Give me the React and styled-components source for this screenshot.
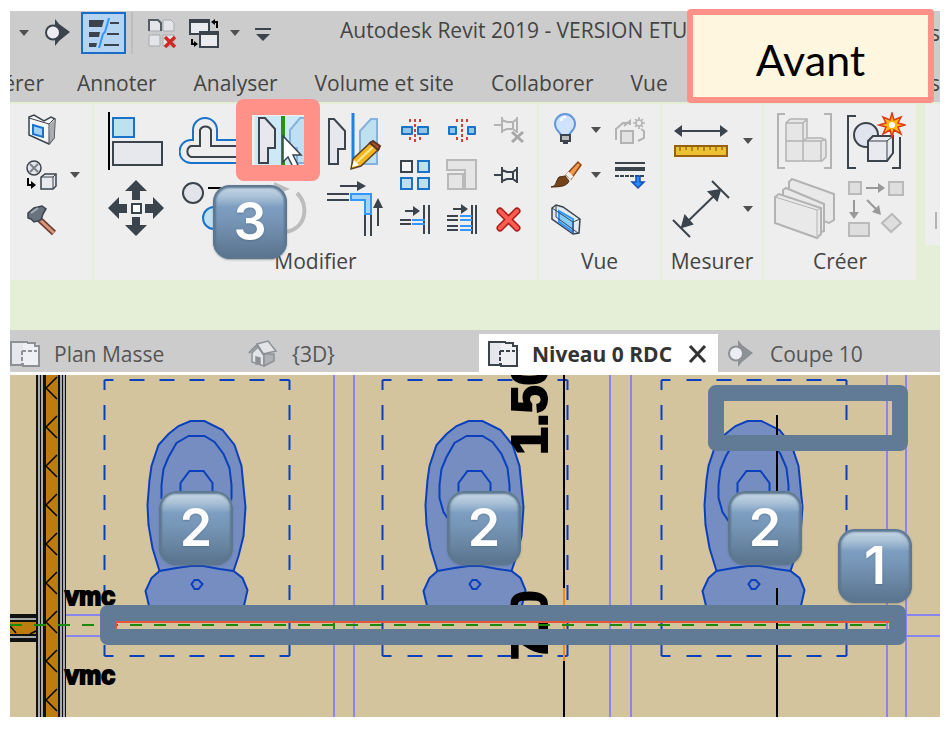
import React from "react";
import styled, { createGlobalStyle, css } from "styled-components";

const ink = "#3b434d";
const blue = "#1a73c8";
const pale = "#bfe0ef";
const gray = "#b3b3b3";

const GlobalStyle = createGlobalStyle`
  * { box-sizing: border-box; }
  body { margin: 0; background: #fff; }
  button { font: inherit; color: inherit; border: 0; padding: 0; background: none; }
  svg { display: block; }
`;

const Page = styled.main`
  position: relative;
  padding: 11px 12px 17px 10px;
  font-family: "Open Sans", "Noto Sans", sans-serif;
  color: #444;
`;

const AppWindow = styled.div`
  overflow: hidden;
  background: #cccccc;
`;

const TitleBar = styled.header`
  display: flex;
  align-items: center;
  height: 44px;
`;

const QuickButton = styled.button`
  display: flex;
  align-items: center;
  justify-content: center;
  flex: none;
  width: ${(p) => p.$w}px;
  height: 42px;
  ${(p) =>
    p.$active &&
    css`
      margin: 0 5px;
      border: 2px solid #1b6ec8;
      background: #b5d4f1;
    `}
`;

const QuickDivider = styled.span`
  width: 2px;
  height: 42px;
  margin-right: 13px;
  background: #bdbdbd;
`;

const WindowTitle = styled.h1`
  margin: 0 0 6px 54px;
  font-size: 21px;
  line-height: 28px;
  font-weight: 400;
  white-space: nowrap;
`;

const TrailingText = styled.span`
  margin: 0 0 0 auto;
  width: 10px;
  font-size: 21px;
  line-height: 28px;
`;

const TabBar = styled.nav`
  display: flex;
  align-items: center;
  gap: 37px;
  height: 47px;
  padding-top: 8px;
`;

const RibbonTab = styled.button`
  flex: none;
  display: flex;
  justify-content: flex-end;
  font-size: 21px;
  line-height: 28px;
  white-space: nowrap;
  ${(p) => p.$clipped && "width: 34px; margin-right: -4px; overflow: hidden;"}
`;

const Ribbon = styled.section`
  position: relative;
  display: flex;
  gap: 2px;
  padding-top: 2px;
  background: #e5eed6;
  border-bottom: 50px solid #e5eed6;
`;

const Panel = styled.section`
  flex: none;
  display: flex;
  flex-direction: column;
  padding: 3px ${(p) => p.$pad}px 0;
  background: #eeeeee;
`;

const PanelEdge = styled.div`
  flex: 1;
  height: 141px;
  margin-left: 7px;
  padding: 108px 0 0 10px;
  background: #eeeeee;
`;

const PanelTitle = styled.h2`
  margin: 0;
  height: 36px;
  font-size: 21px;
  line-height: 34px;
  font-weight: 400;
  text-align: center;
`;

const Tools = styled.div`
  display: flex;
`;

const ToolGrid = styled.div`
  display: grid;
  grid-template-columns: ${(p) => p.$cols};
  grid-template-rows: ${(p) => p.$rows};
  align-content: start;
  height: 137px;
`;

const Tool = styled.button`
  position: relative;
  display: flex;
  align-items: center;
  justify-content: center;
`;

const ToolHighlight = styled.span`
  position: absolute;
  top: -8px;
  left: -9px;
  width: 84px;
  height: 82px;
  border: 16px solid #ff9189;
  border-radius: 8px;
`;

const DocumentTabs = styled.nav`
  display: flex;
  align-items: flex-end;
  height: 45px;
  border-bottom: 3px solid #fff;
`;

const DocumentTab = styled.div`
  display: flex;
  align-items: center;
  gap: 16px;
  flex: none;
  height: 38px;
  width: ${(p) => p.$w}px;
  padding-top: 2px;
  padding-left: ${(p) => p.$inset || 0}px;
  background: ${(p) => (p.$active ? "#fff" : "transparent")};
  font-size: 21px;
  line-height: 28px;
  font-weight: ${(p) => (p.$active ? 700 : 400)};
  color: ${(p) => (p.$active ? "#333" : "#555")};
  white-space: nowrap;
`;

const TabName = styled.button`
  display: flex;
  align-items: center;
  gap: ${(p) => p.$gap || 13}px;
`;

const DrawingArea = styled.section`
  position: relative;
  overflow: hidden;
  background: #d4c49d;
`;

const Outline = styled.div`
  position: absolute;
  left: ${(p) => p.$x}px;
  top: ${(p) => p.$y}px;
  width: ${(p) => p.$w}px;
  height: ${(p) => p.$h}px;
  border: 16px solid #617a96;
  border-radius: 8px;
`;

const Badge = styled.div`
  position: absolute;
  z-index: 2;
  left: ${(p) => p.$x}px;
  top: ${(p) => p.$y}px;
  width: 74px;
  height: 74px;
  display: flex;
  align-items: center;
  justify-content: center;
  border-radius: 17px;
  background: linear-gradient(#c3d5e4 3px, #a9c1d6 12px, #7d9ec1 22px, #7797b8 34px, #5c7690 70px);
  box-shadow: inset 0 0 2px 3px #5d7791, 0 1px 2px #5c6b7788;
  font-family: Inter, "Liberation Sans", sans-serif;
  font-size: 52px;
  line-height: 52px;
  font-weight: 600;
  color: #fff;
  text-shadow: 0 1px 2px #4a637c88;
`;

const StageLabel = styled.div`
  position: absolute;
  z-index: 3;
  top: 9px;
  right: 18px;
  width: 247px;
  height: 94px;
  display: flex;
  align-items: center;
  justify-content: center;
  padding-top: 8px;
  border: 6px solid #ff9189;
  border-radius: 4px;
  background: #fff6df;
  font-family: Lato, "Open Sans", sans-serif;
  font-size: 43px;
  line-height: 52px;
  color: #000;
`;

/* An icon whose view box is its own piece of the toolbar's drawing grid. */
function Icon({ box, children }) {
  const [, , w, h] = box;
  return (
    <svg viewBox={box.join(" ")} width={w} height={h} fill="none" stroke={ink} strokeWidth="2" aria-hidden="true">
      {children}
    </svg>
  );
}

const Caret = () => (
  <Icon box={[0, 0, 10, 6]}>
    <path d="M0 0h10L5 6z" fill="#505050" stroke="none" />
  </Icon>
);

const SectionMark = ({ color = ink }) => (
  <Icon box={[44, 19, 27, 28]}>
    <path d="M55 19l4 5 11 8-11 9-4 5z" fill={color} stroke="none" />
    <circle cx="53" cy="32.500" r="7" fill="#ececf2" stroke={color} />
  </Icon>
);

const ThinLines = () => (
  <Icon box={[86, 16, 34, 34]}>
    <path d="M88 20h15l-2 7H88zM88 32h11l-1 5H88zM88 43h8l-1 4H88z" fill={ink} stroke="none" />
    <path d="M109 23h9M106 34h12M103 45h15" />
    <path d="M108 18l-4 14-2 2-4 14" stroke="#3296ff" />
  </Icon>
);

const CloseHidden = () => (
  <Icon box={[147, 17, 31, 33]}>
    <path d="M149 20h9l3 3v8h-12zM163 20h8l3 3v8h-11zM149 35h11v11h-11zM163 35h11v11h-11z" fill="#e4e5e9" stroke="#a8a9ae" strokeWidth="1" />
    <path d="M149 31V20h9l3 3v8" stroke="#555c66" />
    <path d="M165 37l10 10M175 37l-10 10" stroke="#cf2a22" strokeWidth="3.500" />
  </Icon>
);

const SwitchWindows = () => (
  <Icon box={[190, 17, 33, 32]}>
    <path d="M192 20h19v14h-19z" fill="#eaebef" />
    <path d="M192 21h19" strokeWidth="4" />
    <path d="M202 33h18v14h-18z" fill="#eaebef" />
    <path d="M201 33h20" strokeWidth="4" />
    <path d="M219 28v-6h-3M194 39v5h3" stroke="#000" />
    <path d="M217 19l-4 3 4 3zM196 41l4 3-4 3z" fill="#000" stroke="none" />
  </Icon>
);

const Customize = () => (
  <Icon box={[256, 24, 16, 15]}>
    <path d="M256 27h16" />
    <path d="M257 32h14l-7 7z" fill={ink} stroke="none" />
  </Icon>
);

const WallOpening = () => (
  <Icon box={[27, 114, 30, 33]}>
    <path d="M29 118l5-2 10 6 7-4 4 2-1 19-5 6-20-9z" fill="#f7f7f8" strokeWidth="1.500" />
    <path d="M49 145l1-20 5-5-1 19z" fill="#ababb2" stroke="none" />
    <path d="M29 119l20 6 5-5M49 125v19" strokeWidth="1" />
    <path d="M33 126l10 3v9l-10-3z" stroke={blue} fill="#9fd2f4" />
  </Icon>
);

const LoadFamily = () => (
  <Icon box={[26, 159, 32, 32]}>
    <circle cx="34" cy="168" r="7" fill="#e4e6ea" strokeWidth="1.500" />
    <path d="M30 164l8 8M38 164l-8 8" stroke="#7b828b" strokeWidth="2" />
    <path d="M28 178v7h4" stroke="#000" />
    <path d="M31 181l5 4-5 4z" fill="#000" stroke="none" />
    <path d="M41 177l4-3h11v12l-3 3H41z" fill="#e9eaee" strokeWidth="1.500" />
    <path d="M41 177h12v12M53 177l3-3" strokeWidth="1" />
  </Icon>
);

const Hammer = () => (
  <Icon box={[26, 204, 32, 32]}>
    <path d="M39 219l15 14" stroke="#6e3930" strokeWidth="6" />
    <path d="M39 219l15 14" stroke="#d6977e" strokeWidth="3" />
    <path d="M28 218v-5l6-5 8-2 4 3-3 5-2 6-7 2-3-3z" fill="#69737e" strokeWidth="1.500" />
    <path d="M31 213l7-5" stroke="#a5afb8" />
  </Icon>
);

const Align = () => (
  <Icon box={[107, 111, 56, 60]}>
    <path d="M108 112v58" stroke="#000" />
    <path d="M112 118h21v19h-21z" fill={pale} stroke={blue} />
    <path d="M112 142h49v23h-49z" fill="#e7e8ee" />
  </Icon>
);

const Offset = () => (
  <Icon box={[179, 114, 60, 52]}>
    <path d="M239 139h-22v-10a12 12 0 0 0-24 0v10h-2a11 11 0 0 0 0 23h48" stroke={blue} />
    <path d="M239 145h-28v-16a6 6 0 0 0-11 0v16h-9a6 6 0 0 0 0 11h48" />
  </Icon>
);

const MirrorAxis = () => (
  <Icon box={[252, 116, 53, 50]}>
    <path d="M252 116h53v50h-53z" fill="#cde9f6" stroke="none" />
    <path d="M256 118h6l10 11v19h-7v15h-9z" fill="#e7e8ee" />
    <path d="M303 118h-6l-10 12v18h7v15h9" fill="#bfe0f3" stroke="#83b2df" />
    <path d="M280 116v50" stroke="#2a9410" strokeWidth="4" />
    <path d="M280 136v26l5-5 5 10 5-2-5-10h8z" fill="#fff" strokeWidth="1.500" />
  </Icon>
);

const MirrorDraw = () => (
  <Icon box={[328, 111, 54, 59]}>
    <path d="M329 118h5l11 12v18h-7v15h-9z" fill="#e7e8ee" />
    <path d="M377 118h-6l-11 12v33h17z" fill={pale} stroke="#83b2df" />
    <path d="M353 112v54" stroke="#1c83e6" strokeWidth="3" />
    <path d="M351 168l2-10 18-17 8 7-18 17z" fill="#f4b51c" stroke="#5b4425" strokeWidth="1.500" />
    <path d="M357 161l17-16" stroke="#ffe79a" />
    <path d="M370 142l3-2 7 5-2 4z" fill="#a85528" stroke="#5b3325" />
    <path d="M352 166l2-7 5 5z" fill="#fff" stroke="none" />
  </Icon>
);

const Move = () => (
  <Icon box={[106, 178, 58, 60]}>
    <path d="M135 179l11 11h-7v9h-8v-9h-7zM135 235l11-11h-7v-8h-8v8h-7zM107 207l11-11v7h8v9h-8v6zM163 207l-11-11v7h-8v9h8v6z" fill={ink} stroke="none" />
    <path d="M131 203h9v9h-9z" fill="#fff" />
  </Icon>
);

const Copy = () => (
  <Icon box={[180, 179, 58, 58]}>
    <circle cx="193" cy="192" r="10" fill="#e3e4ea" />
    <circle cx="214" cy="217" r="11" fill={pale} stroke={blue} />
    <path d="M208 187h22v16" stroke="#000" />
  </Icon>
);

const Rotate = () => (
  <Icon box={[252, 181, 56, 56]}>
    <path d="M295 193c13 13 9 36-12 39" stroke="#bdbdbd" strokeWidth="4" />
    <path d="M272 182l16 7-15 6z" fill="#bdbdbd" stroke="none" />
  </Icon>
);

const TrimCorner = () => (
  <Icon box={[325, 179, 58, 58]}>
    <path d="M326 193h22M326 199h22M364 214v21M370 214v21" />
    <path d="M350 193h20v20h-6v-14h-14z" fill="#a5d4f2" stroke="#3296ff" />
    <path d="M339 185h18M377 225v-19" />
    <path d="M356 180l9 5-9 5zM372 207l5-10 5 10z" fill={ink} stroke="none" />
  </Icon>
);

const Split = ({ gap }) => (
  <Icon box={[401, 119, 30, 24]}>
    <path d={gap ? "M403 128h7v7h-7zM422 128h7v7h-7z" : "M403 128h10v7h-10zM419 128h10v7h-10z"} fill="#8fc8e6" stroke={blue} strokeLinejoin="round" />
    <path d="M416 120v24M411 120v5M421 120v5M411 138v5M421 138v5" stroke="#cf4036" strokeDasharray="3 2" />
  </Icon>
);

const Pin = ({ off }) => (
  <Icon box={[495, 114, 31, 31]}>
    <g stroke={off ? gray : ink} transform={off ? undefined : "translate(0 5)"}>
      <path d="M496 125h7M504 117v16M519 117v16M504 120l5 2h6l4-3M504 131l5-2h6l4 3M515 121v9" strokeWidth="2" />
    </g>
    {off && <path d="M514 132l11 10M525 132l-11 10" stroke="#a7a7a7" strokeWidth="3" />}
  </Icon>
);

const ArrayTool = () => (
  <Icon box={[401, 159, 32, 32]}>
    <path d="M403 161h11v11h-11z" fill="#f4f4f6" />
    <path d="M420 161h11v11h-11zM403 178h11v11h-11zM420 178h11v11h-11z" fill={pale} stroke={blue} />
  </Icon>
);

const Scale = () => (
  <Icon box={[448, 160, 32, 32]}>
    <path d="M449 161h29v29h-11v-19h-18z" fill="#e5e5e5" stroke="#b9b9b9" />
    <path d="M450 175h15v15h-15z" fill="#e5e5e5" stroke="#b9b9b9" />
  </Icon>
);

const TrimSingle = () => (
  <Icon box={[402, 205, 32, 31]}>
    <path d="M408 212h11M403 221h11M403 225h11M427 206v29M432 206v29" strokeWidth="2" />
    <path d="M415 221h13M415 225h13" stroke="#3296ff" />
    <path d="M416 207l7 5-7 5z" fill={ink} stroke="none" />
  </Icon>
);

const TrimMultiple = () => (
  <Icon box={[448, 205, 32, 31]}>
    <path d="M455 210h11M449 217h11M449 221h11M449 227h11M449 231h11M474 206v29M478 206v29" strokeWidth="2" />
    <path d="M462 217h12M462 221h12M462 227h12M462 231h12" stroke="#3296ff" />
    <path d="M463 205l7 5-7 5z" fill={ink} stroke="none" />
  </Icon>
);

const Delete = () => (
  <Icon box={[498, 208, 25, 25]}>
    <path d="M502 212l17 17M519 212l-17 17" stroke="#a81d18" strokeWidth="7" strokeLinecap="round" />
    <path d="M502 212l17 17M519 212l-17 17" stroke="#fc5d50" strokeWidth="4" strokeLinecap="round" />
  </Icon>
);

const Bulb = () => (
  <Icon box={[553, 114, 25, 33]}>
    <path d="M561 137c0-4-6-5-6-12a10 10 0 0 1 20 0c0 7-6 8-6 12z" fill="#cfe3ff" stroke="#6397dd" />
    <path d="M561 122c0-3 3-4 5-4" stroke="#fff" />
    <path d="M561 136h9v6h-9zM563 144h5" fill="#bbb" />
  </Icon>
);

const Brush = () => (
  <Icon box={[551, 160, 32, 31]}>
    <path d="M567 176l12-13 3 3-10 14z" fill="#ef9a50" stroke="#8c4512" strokeWidth="1.500" />
    <path d="M568 174l5 5" stroke="#eee" strokeWidth="4" />
    <path d="M552 188c6-1 4-5 8-10l6-1 4 5c-2 5-8 6-18 6z" fill="#74431b" stroke="#4c2a12" strokeWidth="1" />
  </Icon>
);

const SelectionBox = () => (
  <Icon box={[551, 204, 31, 32]}>
    <path d="M553 208l4-3 7 2 17 12-1 14-6 1-21-15z" fill="#e4e9ee" strokeWidth="1.500" />
    <path d="M560 211l14 8v13l-14-10z" fill="#86cdf6" stroke="#3296ff" />
    <path d="M553 208l21 14 7-3M574 222v12M557 206v11l22 16" strokeWidth="1" />
  </Icon>
);

const Displace = () => (
  <Icon box={[616, 114, 33, 30]}>
    <g stroke={gray} strokeWidth="2">
      <path d="M618 139v-11l7-6h7M643 128l3 2v7l-6 3M626 125l6-5v4" />
      <path d="M623 130h12v12h-12z" fill="#e2e2e2" />
      <path d="M635 122h12M641 116v12M637 118l8 8M645 118l-8 8" strokeWidth="1.500" />
      <circle cx="641" cy="122" r="3" fill="#eee" strokeWidth="1.500" />
    </g>
  </Icon>
);

const Linework = () => (
  <Icon box={[616, 162, 33, 30]}>
    <path d="M617 165h30" />
    <path d="M617 171h30" strokeWidth="4" />
    <path d="M617 178h30" strokeDasharray="4 1" />
    <path d="M638 178h4v6h4l-6 6-6-6h4z" fill="#268bff" stroke="#1450ae" strokeWidth="1.500" />
  </Icon>
);

const Ruler = () => (
  <Icon box={[672, 123, 56, 36]}>
    <path d="M679 131h42" />
    <path d="M673 131l8-6v12zM727 131l-8-6v12z" fill={ink} stroke="none" />
    <path d="M674 146h52v10h-52z" fill="#edc132" stroke="#99600f" />
    <path d="M679 147v4M685 147v3M691 147v4M697 147v3M703 147v4M709 147v3M715 147v4M721 147v3" stroke="#755010" strokeWidth="1" />
  </Icon>
);

const AlignedDimension = () => (
  <Icon box={[672, 178, 58, 58]}>
    <path d="M683 224l36-35M673 218l17 17M712 179l17 17" />
    <path d="M682 225l3-11 7 8zM720 188l-3 10-8-8z" fill={ink} />
  </Icon>
);

const Assembly = () => (
  <Icon box={[777, 113, 58, 58]}>
    <g stroke={gray}>
      <path d="M786 115h-7v54h7M825 115h7v54h-7" />
      <path d="M787 124l4-4h17v19h15l4 3v16l-4 4h-36z" fill="#e6e6e6" strokeWidth="1.500" />
      <path d="M787 124h17v38M804 124l4-4M787 142h35v20M804 142l4-3M822 142l5-2" strokeWidth="1.500" />
    </g>
  </Icon>
);

const CreateGroup = () => (
  <Icon box={[848, 111, 60, 58]}>
    <path d="M858 115h-8v52h8M894 167h8v-31" />
    <circle cx="868" cy="134" r="12" fill="#dfe4ee" />
    <path d="M870 140l5-5h20v17l-6 8h-19z" fill="#e8eaf0" />
    <path d="M870 140h19v20M889 140l6-5" strokeWidth="1" />
    <path d="M894 112l2 7 7-3-3 6 7 2-7 2 3 7-7-4-2 7-2-7-7 4 3-7-7-2 7-2-3-6 7 3z" fill="#ffb413" stroke="#dc3b17" strokeWidth="1.500" />
    <circle cx="894" cy="124" r="3" fill="#fff" stroke="none" />
  </Icon>
);

const Parts = () => (
  <Icon box={[775, 178, 62, 62]}>
    <g fill="#e9e9e9" stroke={gray} strokeWidth="2">
      <path d="M790 182l3-3 42 15v26l-5 3-40-15z" />
      <path d="M784 190l3-2 38 16v27l-5 2-36-14z" />
      <path d="M776 197l4-3 42 14v26l-4 4-42-15z" />
      <path d="M776 197l42 13v26M818 210l4-2" strokeWidth="1" />
    </g>
  </Icon>
);

const Similar = () => (
  <Icon box={[846, 178, 58, 58]}>
    <g fill="#dedede" stroke="#bababa">
      <path d="M848 180h12v12h-12zM888 180h14v13h-14zM848 221h20v13h-20zM891 212l9 9-10 9-9-9z" />
    </g>
    <path d="M865 186h13M853 198v13M866 198l9 9" stroke="#999" />
    <path d="M877 181l7 5-7 5zM848 210h10l-5 7zM880 213l-9-3 7-7z" fill="#999" stroke="none" />
  </Icon>
);

const PlanIcon = ({ color = "#8d9196" }) => (
  <Icon box={[488, 339, 31, 28]}>
    <path d="M489 341h16v23h-16z" fill="#e6e7ec" stroke={color} />
    <path d="M501 364v-22h12l4 3v20h-16z" fill="#eff0f3" stroke="none" />
    <path d="M505 342h8v3h4v20h-16v-3" stroke={color} />
    <path d="M500 350h15M500 350v15" stroke={color} strokeDasharray="4 2" />
  </Icon>
);

const HouseIcon = () => (
  <Icon box={[248, 339, 30, 28]}>
    <g stroke="#8d9196" strokeWidth="1.500" fill="#e3e4e7">
      <path d="M252 352l6-6 6 8v11l-12-4z" />
      <path d="M264 353h10v7l-10 5z" fill="#aeb1b6" />
      <path d="M257 343l11-3 8 10-13 3z" />
      <path d="M249 352l8-8 7 10" fill="none" strokeWidth="2" />
      <path d="M256 356v7h4v-6z" fill="#8d9196" />
    </g>
  </Icon>
);

const CloseIcon = () => (
  <Icon box={[690, 345, 20, 18]}>
    <path d="M692 346l15 16M707 346l-15 16" stroke="#333" strokeWidth="3" />
  </Icon>
);

const dashH = "9 16 15 15 15 15 15 15 15 15 15 15 15 200";
const dashV = "10 15 15 15 15 15 15 15 15 15 15 15 15 15 15 15 15 15 15 200";

function Toilet({ x }) {
  return (
    <g transform={`translate(${x} 0)`} fill="#758dc1" stroke="#0b40bd" strokeWidth="2">
      <path d="M-37 571L-44 548-48 525-49 505-47 480-45 466-38 445-28 434-18 426-6 421H8L26 430 38 445 45 466 48 497 49 507 47 536 42 556 37 571" />
      <path d="M-8 436l-12 7-8 14-5 12-2 16v13l4 14 8 12h46l8-12 4-14v-13l-2-17-6-14-9-12-10-6z" />
      <path d="M-16 498v-15l9-12H7l9 12v15z" />
      <path d="M-47 608L-51 591-45 578-37 571-20 568-6 566H7L23 569 37 571 46 578 51 590 47 608z" />
      <path d="M-5 584l3-4h4l4 4-4 5h-4z" />
      <path d="M-92 380H93M-92 656H93" fill="none" strokeDasharray={dashH} />
      <path d="M-92 380v276M93 380v276" fill="none" strokeDasharray={dashV} />
    </g>
  );
}

const hatches = Array.from({ length: 9 }, (_, i) => 388 + i * 39);

function FloorPlan() {
  return (
    <svg width="100%" height="342" role="img" aria-label="Niveau 0 RDC">
      <g transform="translate(-10 -375)">
        <g stroke="#8886ee" strokeWidth="2">
          <path d="M334 375v342M354 375v342M610 375v342M631 375v342M887 375v342M906 375v342" />
          <path d="M66 615h40M66 636h40M900 615h2000M900 636h2000" />
        </g>
        <path d="M10 614h27v28H10z" fill="#111" />
        <path d="M10 619h27M10 637h27" stroke="#a5aaa8" strokeWidth="2" />
        <path d="M10 622h27v12H10z" fill="#bd7c10" />
        <path d="M10 626l6 7M30 634l6-3" stroke="#000" strokeWidth="1.500" />
        <path d="M36 375h30v342H36z" fill="#111" />
        <path d="M39 375v342M42 375v342M61 375v342M64 375v342" stroke="#aaa9ad" strokeWidth="2" />
        <path d="M46 375h12v342H46z" fill="#bd7c10" />
        {hatches.map((y) => (
          <path key={y} d={`M57 ${y - 11}L46 ${y}l11 11`} fill="none" stroke="#000" strokeWidth="1.500" />
        ))}
        <Toilet x={196.5} />
        <Toilet x={474.5} />
        <Toilet x={753.5} />
        <path d="M564 375v342M777 415v76M777 588v129" stroke="#000" strokeWidth="2" />
        <path d="M564 588v73" stroke="#f58b20" strokeWidth="2" />
        <g fontFamily="Liberation Sans, sans-serif" fontWeight="700" fill="#000" stroke="#000">
          <g fontSize="50" strokeWidth="2">
            <text transform="translate(547 455) rotate(-90)">1.50</text>
            <text transform="translate(547 660) rotate(-90)">7.0</text>
          </g>
          <g fontSize="25" strokeWidth="2">
            <text x="65" y="605">vmc</text>
            <text x="65" y="684">vmc</text>
          </g>
        </g>
        <path d="M10 625h880" stroke="#1b8a0b" strokeWidth="2" strokeDasharray="12 12" />
        <path d="M334 621v9" stroke="#1b8a0b" strokeWidth="2" />
        <path d="M116 630v-8h774v8" fill="none" stroke="#e2573c" strokeWidth="2" />
      </g>
    </svg>
  );
}

const B = ({ label, children }) => (
  <Tool type="button" aria-label={label}>{children}</Tool>
);

export default function App() {
  return (
    <Page>
      <GlobalStyle />
      <StageLabel>Avant</StageLabel>
      <AppWindow>
        <TitleBar>
          <QuickButton $w={28} aria-label="Options de mesure"><Caret /></QuickButton>
          <QuickButton $w={38} aria-label="Coupe"><SectionMark /></QuickButton>
          <QuickButton $w={45} $active aria-label="Lignes fines" aria-pressed="true"><ThinLines /></QuickButton>
          <QuickDivider />
          <QuickButton $w={33} aria-label="Fermer les fenêtres cachées"><CloseHidden /></QuickButton>
          <QuickButton $w={51} aria-label="Changer de fenêtre"><SwitchWindows /></QuickButton>
          <QuickButton $w={10} aria-label="Liste des fenêtres"><Caret /></QuickButton>
          <QuickButton $w={46} aria-label="Personnaliser"><Customize /></QuickButton>
          <WindowTitle>Autodesk Revit 2019 - VERSION ETU</WindowTitle>
          <TrailingText>s</TrailingText>
        </TitleBar>
        <TabBar aria-label="Ruban">
          <RibbonTab $clipped>érer</RibbonTab>
          <RibbonTab>Annoter</RibbonTab>
          <RibbonTab>Analyser</RibbonTab>
          <RibbonTab>Volume et site</RibbonTab>
          <RibbonTab>Collaborer</RibbonTab>
          <RibbonTab>Vue</RibbonTab>
          <TrailingText>s</TrailingText>
        </TabBar>
        <Ribbon>
          <Badge $x={203} $y={83}>3</Badge>
          <Panel $pad={8}>
            <ToolGrid $cols="48px 18px" $rows="repeat(3, 45px)">
              <B label="Ouverture"><WallOpening /></B><span />
              <B label="Charger"><LoadFamily /></B>
              <B label="Options de chargement"><Caret /></B>
              <B label="Démolir"><Hammer /></B>
            </ToolGrid>
          </Panel>
          <Panel $pad={5}>
            <Tools>
              <ToolGrid $cols="repeat(4, 73px)" $rows="repeat(2, 68px)">
                <B label="Aligner"><Align /></B>
                <B label="Décaler"><Offset /></B>
                <B label="Symétrie - Choisir un axe"><MirrorAxis /><ToolHighlight /></B>
                <B label="Symétrie - Dessiner un axe"><MirrorDraw /></B>
                <B label="Déplacer"><Move /></B>
                <B label="Copier"><Copy /></B>
                <B label="Rotation"><Rotate /></B>
                <B label="Ajuster en angle"><TrimCorner /></B>
              </ToolGrid>
              <ToolGrid $cols="repeat(3, 47px)" $rows="repeat(3, 45px)">
                <B label="Scinder"><Split /></B>
                <B label="Scinder avec espace"><Split gap /></B>
                <B label="Déverrouiller"><Pin off /></B>
                <B label="Réseau"><ArrayTool /></B>
                <B label="Échelle"><Scale /></B>
                <B label="Verrouiller"><Pin /></B>
                <B label="Ajuster un élément"><TrimSingle /></B>
                <B label="Ajuster plusieurs éléments"><TrimMultiple /></B>
                <B label="Supprimer"><Delete /></B>
              </ToolGrid>
            </Tools>
            <PanelTitle>Modifier</PanelTitle>
          </Panel>
          <Panel $pad={3}>
            <ToolGrid $cols="47px 14px 54px" $rows="repeat(3, 45px)">
              <B label="Masquer"><Bulb /></B>
              <B label="Options de masquage"><Caret /></B>
              <B label="Déplacer les éléments"><Displace /></B>
              <B label="Remplacer"><Brush /></B>
              <B label="Options de remplacement"><Caret /></B>
              <B label="Lignes"><Linework /></B>
              <B label="Zone de sélection"><SelectionBox /></B>
            </ToolGrid>
            <PanelTitle>Vue</PanelTitle>
          </Panel>
          <Panel $pad={3}>
            <ToolGrid $cols="72px 22px" $rows="repeat(2, 68px)">
              <B label="Mesurer"><Ruler /></B>
              <B label="Options de mesure"><Caret /></B>
              <B label="Cote alignée"><AlignedDimension /></B>
              <B label="Options de cote"><Caret /></B>
            </ToolGrid>
            <PanelTitle>Mesurer</PanelTitle>
          </Panel>
          <Panel $pad={5}>
            <ToolGrid $cols="71px 71px" $rows="repeat(2, 68px)">
              <B label="Créer un assemblage"><Assembly /></B>
              <B label="Créer un groupe"><CreateGroup /></B>
              <B label="Créer des pièces"><Parts /></B>
              <B label="Créer un élément similaire"><Similar /></B>
            </ToolGrid>
            <PanelTitle>Créer</PanelTitle>
          </Panel>
          <PanelEdge>
            <Icon box={[0, 0, 5, 17]}><path d="M1 0v17" stroke={gray} /></Icon>
          </PanelEdge>
        </Ribbon>
        <DocumentTabs aria-label="Vues ouvertes">
          <DocumentTab $w={238}><TabName><PlanIcon />Plan Masse</TabName></DocumentTab>
          <DocumentTab $w={231}><TabName $gap={14}><HouseIcon />{"{3D}"}</TabName></DocumentTab>
          <DocumentTab $w={239} $inset={9} $active>
            <TabName>
              <PlanIcon color={ink} />Niveau 0 RDC
            </TabName>
            <TabName aria-label="Fermer"><CloseIcon /></TabName>
          </DocumentTab>
          <DocumentTab $w={170} $inset={9}>
            <TabName $gap={16}><SectionMark color="#8d9196" />Coupe 10</TabName>
          </DocumentTab>
        </DocumentTabs>
        <DrawingArea>
          <FloorPlan />
          <Outline $x={90} $y={230} $w={806} $h={40} />
          <Outline $x={698} $y={10} $w={200} $h={66} />
          <Badge $x={149} $y={116}>2</Badge>
          <Badge $x={437} $y={116}>2</Badge>
          <Badge $x={718} $y={116}>2</Badge>
          <Badge $x={828} $y={154}>1</Badge>
        </DrawingArea>
      </AppWindow>
    </Page>
  );
}
